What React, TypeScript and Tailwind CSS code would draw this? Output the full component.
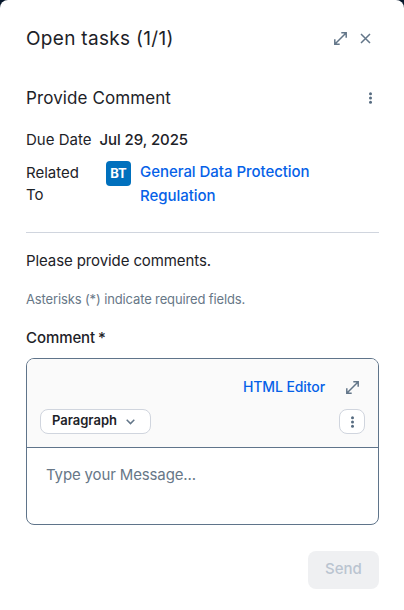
import React from 'react';

function ExpandIcon() {
  return (
    <svg width="13" height="13" viewBox="0 0 13 13" fill="none" stroke="#637689" strokeWidth="1.5">
      <path d="M1 12 12 1M7.3.8h4.9v4.9M5.7 12.2H.8V7.3" />
    </svg>
  );
}

function CloseIcon() {
  return (
    <svg width="11" height="11" viewBox="0 0 11 11" fill="none" stroke="#637689" strokeWidth="1.5">
      <path d="M1 1l9 9M10 1l-9 9" />
    </svg>
  );
}

function DotsIcon() {
  return (
    <svg width="3" height="12" viewBox="0 0 3 12" fill="#566b80">
      <circle cx="1.5" cy="1.7" r="1.5" />
      <circle cx="1.5" cy="6" r="1.5" />
      <circle cx="1.5" cy="10.3" r="1.5" />
    </svg>
  );
}

export default function App() {
  return (
    <div className="h-[610px] w-[404px] bg-[#06172b]">
      <main className="flex h-full flex-col rounded-t-[8px] bg-white pl-[26px] pr-[25px] font-['Inter',sans-serif] text-[15px] text-[#1d2228]">
        <header className="mt-[27px] flex h-6 items-center">
          <h1 className="flex-1 text-[19px] leading-6 tracking-[0.31px]">Open tasks (1/1)</h1>
          <button className="mr-[13px] pb-[2px]" aria-label="Expand"><ExpandIcon /></button>
          <button className="mr-[8px] pb-[2px]" aria-label="Close"><CloseIcon /></button>
        </header>
        <div className="mt-[35px] flex h-6 items-center justify-between pr-[7px]">
          <h2 className="text-[17px] leading-6 tracking-[0.1px]">Provide Comment</h2>
          <button aria-label="More"><DotsIcon /></button>
        </div>
        <div className="mt-[19px] flex h-[22px] leading-[22px]">
          <span className="w-[73.5px] whitespace-nowrap">Due Date</span>
          <span className="font-medium tracking-[-0.09px]">Jul 29, 2025</span>
        </div>
        <div className="mt-[9px] flex h-[48px]">
          <span className="mt-[2px] w-[80px] pr-5 leading-[22px]">Related To</span>
          <span className="mt-[1px] flex size-[25px] items-center justify-center rounded-[4px] bg-[#0070bd] text-[13px] font-bold text-white">BT</span>
          <a className="ml-[9px] w-[190px] font-medium leading-6 tracking-[-0.04px] text-[#0561e8]">General Data Protection Regulation</a>
        </div>
        <hr className="mt-6 border-[#d0d5de]" />
        <p className="mt-[17px] leading-[22px] tracking-[-0.1px]">Please provide comments.</p>
        <p className="mt-[17px] text-[13px] leading-[20px] tracking-[-0.13px] text-[#677787]">Asterisks (*) indicate required fields.</p>
        <label className="mt-[18px] font-medium leading-[22px] tracking-[-0.08px]">Comment<span className="ml-[3px]">*</span></label>
        <section className="mt-[9px] flex h-[167px] flex-col overflow-hidden rounded-[8px] border border-[#5f748a]">
          <div className="flex h-[89px] flex-col border-b border-[#5f748a] bg-[#fafafa] px-[13px] pt-[18px]">
            <div className="flex h-5 items-center justify-end pr-[6px]">
              <a className="mr-[21px] text-[14px] font-medium leading-5 tracking-[-0.09px] text-[#0561e8]">HTML Editor</a>
              <span className="pt-px"><ExpandIcon /></span>
            </div>
            <div className="mt-[12px] flex justify-between">
              <button className="flex h-[25px] w-[111px] items-center rounded-[8px] border border-[#d0d5de] bg-white pb-px pl-[11px] text-[13px] font-semibold">
                Paragraph
                <svg className="ml-[9px] mt-px" width="9" height="6" viewBox="0 0 9 6" fill="none" stroke="#637689" strokeWidth="1.5"><path d="M.7.8 4.5 4.6 8.3.8" /></svg>
              </button>
              <button aria-label="More tools" className="flex h-[25px] w-[26px] items-center justify-center rounded-[8px] border border-[#d0d5de] bg-white pl-px"><DotsIcon /></button>
            </div>
          </div>
          <div className="pl-[19px] pt-[16px] leading-[22px] tracking-[-0.14px] text-[#677787]">Type your Message...</div>
        </section>
        <button className="mt-[26px] h-[38px] w-[71px] self-end rounded-[8px] bg-[#eff0f2] pb-[2px] font-medium text-[#bac4d0]">Send</button>
      </main>
    </div>
  );
}
